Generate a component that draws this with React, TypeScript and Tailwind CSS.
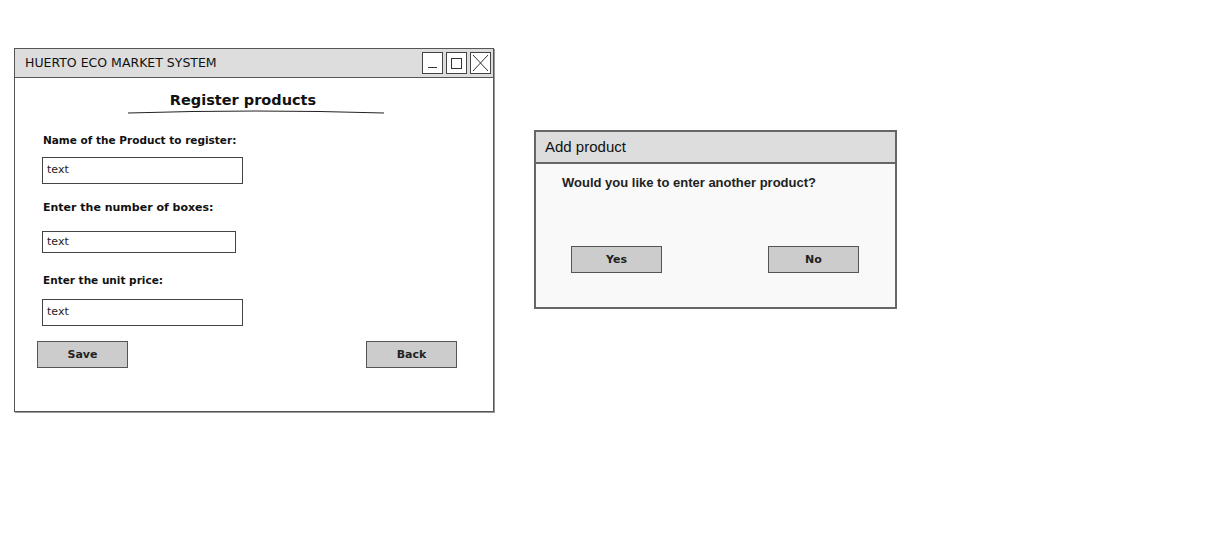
import React from 'react';

const sketch = { fontFamily: '"Comic Sans MS", "DejaVu Sans", sans-serif' };
const plain = { fontFamily: '"Liberation Sans", Arial, sans-serif' };

function Field({ width }: { width: string }) {
    return (
        <div className={`${width} h-full border border-[#444] bg-white flex items-center pl-[4px] text-[11px] text-[#222]`}>
            text
        </div>
    );
}

function SketchButton({ label, className = '' }: { label: string; className?: string }) {
    return (
        <div className={`w-[91px] h-[27px] bg-[#cccccc] border border-[#555] flex items-center justify-center pt-[2px] text-[11px] font-bold text-[#222] ${className}`}>
            {label}
        </div>
    );
}

function WindowControls() {
    return (
        <div className="flex gap-[3px] mr-[2px]">
            <div className="w-[21px] h-[22px] border border-[#444] bg-white flex items-end justify-center pb-[5px]">
                <div className="w-[9px] h-[1px] bg-[#333]" />
            </div>
            <div className="w-[21px] h-[22px] border border-[#444] bg-white flex items-center justify-center">
                <div className="w-[11px] h-[11px] border border-[#333]" />
            </div>
            <div className="w-[21px] h-[22px] border border-[#444] bg-white">
                <svg width="19" height="20" viewBox="0 0 19 20">
                    <path d="M2 2 L17 18 M17 2 L2 18" stroke="#333" strokeWidth="1" fill="none" />
                </svg>
            </div>
        </div>
    );
}

export default function App() {
    return (
        <div className="w-[1230px] h-[559px] bg-white flex items-start pl-[14px] pt-[48px] gap-[40px]" style={sketch}>
            {/* Main register window */}
            <div className="w-[480px] h-[364px] border border-[#555] bg-white flex flex-col shadow-[1px_1px_0_#999]">
                <div className="h-[29px] bg-[#dddddd] border-b border-[#555] flex items-center justify-between pl-[10px]">
                    <span className="text-[12.5px] text-[#111] pt-[1px]">HUERTO ECO MARKET SYSTEM</span>
                    <WindowControls />
                </div>

                <div className="flex flex-col">
                    <div className="mt-[12px] h-[20px] leading-[20px] text-center text-[14.5px] font-bold text-[#111] pr-[22px]">
                        Register products
                    </div>
                    <svg className="ml-[112px]" width="258" height="4" viewBox="0 0 258 4">
                        <path d="M1 3 Q129 -1 257 3" stroke="#222" strokeWidth="1" fill="none" />
                    </svg>

                    <div className="mt-[18px] ml-[28px] h-[16px] leading-[16px] text-[10.5px] font-bold text-[#111]">
                        Name of the Product to register:
                    </div>
                    <div className="mt-[9px] ml-[27px] h-[27px]">
                        <Field width="w-[201px]" />
                    </div>

                    <div className="mt-[16px] ml-[28px] h-[16px] leading-[16px] text-[11px] font-bold text-[#111]">
                        Enter the number of boxes:
                    </div>
                    <div className="mt-[15px] ml-[27px] h-[22px]">
                        <Field width="w-[194px]" />
                    </div>

                    <div className="mt-[19px] ml-[28px] h-[16px] leading-[16px] text-[10.5px] font-bold text-[#111]">
                        Enter the unit price:
                    </div>
                    <div className="mt-[11px] ml-[27px] h-[27px]">
                        <Field width="w-[201px]" />
                    </div>

                    <div className="mt-[15px] ml-[22px] mr-[36px] flex justify-between">
                        <SketchButton label="Save" />
                        <SketchButton label="Back" />
                    </div>
                </div>
            </div>

            {/* Add product dialog */}
            <div className="mt-[82px] w-[363px] h-[179px] border-2 border-[#666] bg-[#f9f9f9] flex flex-col" style={plain}>
                <div className="h-[32px] bg-[#dddddd] border-b-2 border-[#666] flex items-center pl-[9px] text-[15px] text-[#111]">
                    Add product
                </div>
                <div className="mt-[11px] ml-[26px] h-[16px] leading-[16px] text-[13px] font-bold text-[#222]">
                    Would you like to enter another product?
                </div>
                <div className="mt-[55px] ml-[35px] mr-[36px] flex justify-between" style={sketch}>
                    <SketchButton label="Yes" />
                    <SketchButton label="No" />
                </div>
            </div>
        </div>
    );
}
